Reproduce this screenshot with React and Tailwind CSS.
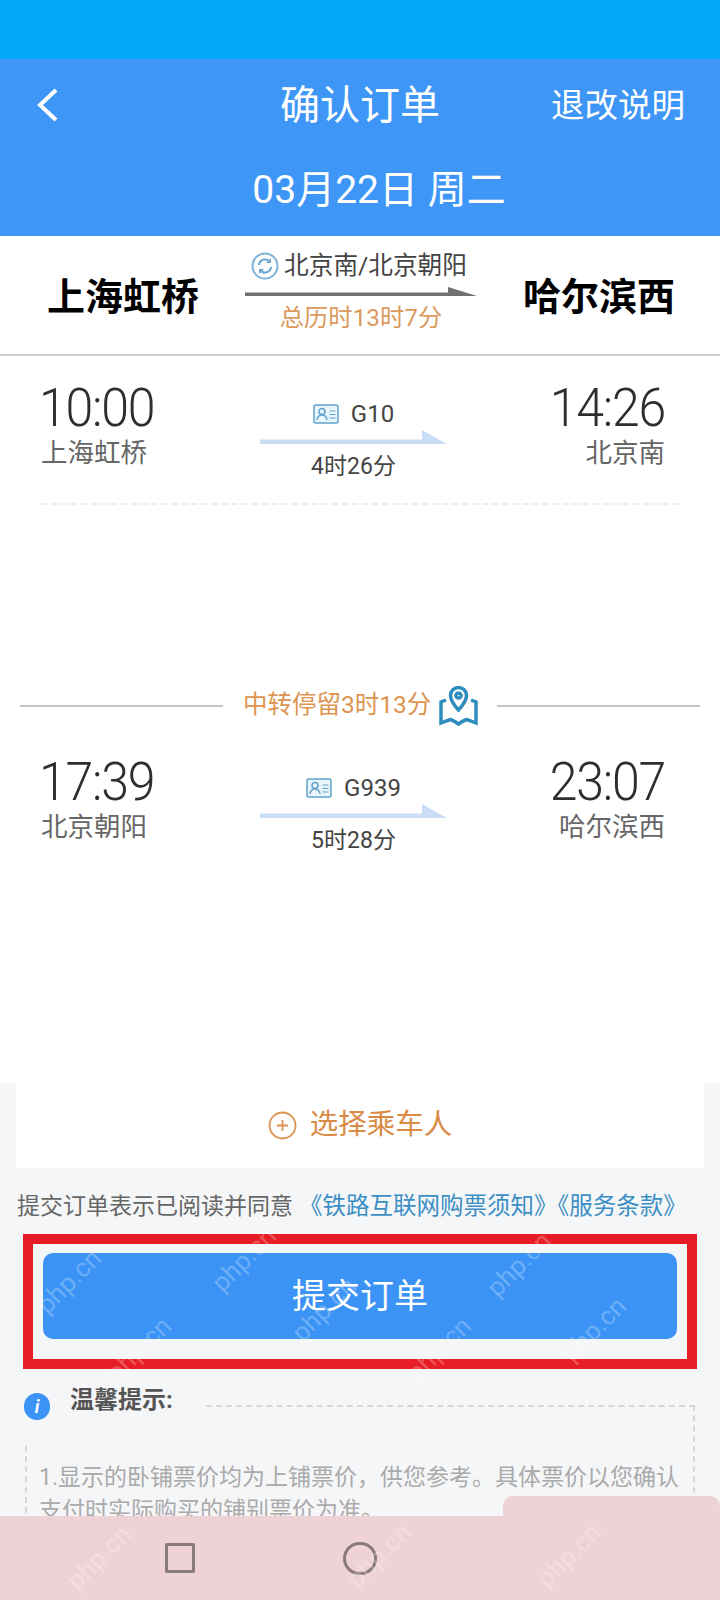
import React from 'react';

const font = { fontFamily: '"Roboto", "Noto Sans CJK SC", sans-serif' };

const marks = [
  [30, 1262], [205, 1240], [285, 1290], [480, 1245], [555, 1310], [100, 1330],
  [400, 1330], [60, 1538], [340, 1536], [530, 1536],
];

function SyncIcon() {
  return (
    <svg width="28" height="28" viewBox="0 0 28 28" fill="none">
      <circle cx="14" cy="14" r="12.5" stroke="#7db3d9" strokeWidth="2" />
      <path d="M8 13a6 6 0 0 1 10.5-3.5M20 15a6 6 0 0 1-10.5 3.5" stroke="#6fa8d2" strokeWidth="2.2" />
      <path d="M20 6v5h-5M8 22v-5h5" fill="#6fa8d2" />
    </svg>
  );
}

function IdIcon() {
  return (
    <svg width="26" height="20" viewBox="0 0 26 20" fill="none" stroke="#5fa3cc" strokeWidth="1.5">
      <rect x="1" y="1" width="24" height="18" rx="1.5" fill="#eaf4fb" />
      <circle cx="9" cy="7.5" r="3" />
      <path d="M4 16c.5-3.5 2.5-5 5-5s4.500 1.500 5 5" />
      <path d="M16.500 7h6M16.500 10.500h6M16.500 14h6" strokeWidth="1.200" />
    </svg>
  );
}

function MapIcon() {
  return (
    <svg width="41" height="41" viewBox="0 0 41 41" fill="none" stroke="#2f8dbd" strokeWidth="3.500">
      <path d="M20.500 25C15 19 12.500 15 12.500 10.500a8 8 0 0 1 16 0C28.500 15 26 19 20.500 25z" />
      <circle cx="20.500" cy="10.500" r="2.600" />
      <path d="M8 15 3 17v21q5-2 9.500-3.500 4 1.500 8 4.500 4-3 8-4.500 4.500 1.500 9.500 3.500V17l-5-2" />
    </svg>
  );
}

function Segment({ from, to, dep, arr, train, cost }) {
  return (
    <div className="grid grid-cols-[219px_187px_1fr] pl-[41px] pr-[55px]">
      <div>
        <p className="-ml-[2px] text-[50px] leading-[54px] font-light text-[#2e2e2e] tracking-tight origin-left scale-y-[1.06]">{dep}</p>
        <p className="text-[26.500px] leading-[36px] text-[#666]">{from}</p>
      </div>
      <div className="flex flex-col items-center pt-[19px]">
        <div className="flex items-center h-[28px] gap-[12px]">
          <IdIcon />
          <span className="text-[24px] text-[#444]">{train}</span>
        </div>
        <svg className="mt-[2px]" width="187" height="14" viewBox="0 0 187 14">
          <path d="M0 9.500H162V0L187 14H0z" fill="#c9ddf5" />
        </svg>
        <span className="mt-[7px] text-[23px] leading-[32px] text-[#444]">{cost}</span>
      </div>
      <div className="text-right">
        <p className="text-[50px] leading-[54px] font-light text-[#2e2e2e] tracking-tight origin-right scale-y-[1.06]">{arr}</p>
        <p className="text-[26.500px] leading-[36px] text-[#666]">{to}</p>
      </div>
    </div>
  );
}

export default function App() {
  return (
    <div className="relative h-[1600px] overflow-hidden bg-[#f5f6f8]" style={font}>
      <div className="h-[59px] bg-[#00a8f5]" />

      <header className="h-[177px] bg-[#3e96f6] text-white">
        <div className="relative flex items-center justify-center h-[94px]">
          <svg className="absolute left-[35px] top-[29px]" width="24" height="34" viewBox="0 0 24 34" fill="none" stroke="white" strokeWidth="4">
            <path d="M21 2 5 17l16 15" />
          </svg>
          <h1 className="text-[40px] font-normal">确认订单</h1>
          <button className="absolute right-[35px] text-[33.500px]">退改说明</button>
        </div>
        <p className="mt-[11px] pl-[38px] text-center text-[39px] leading-[52px]">03月22日 周二</p>
      </header>

      <section className="h-[120px] bg-white border-b-2 border-[#ccc] flex items-center justify-between pl-[47px] pr-[45px] pb-[6px]">
        <span className="mt-[10px] text-[38px] font-bold text-black">上海虹桥</span>
        <div className="flex flex-col items-center w-[232px]">
          <div className="flex items-center gap-[5px] h-[36px] -mt-[3px] mb-[3px] -ml-[4px]">
            <SyncIcon />
            <span className="text-[24.700px] text-[#444]">北京南/北京朝阳</span>
          </div>
          <svg width="232" height="10" viewBox="0 0 232 10">
            <path d="M0 5.500H203V0L232 9H0z" fill="#707070" />
          </svg>
          <span className="mt-[3px] -mb-[2px] text-[24.300px] leading-[36px] text-[#db9a5e]">总历时13时7分</span>
        </div>
        <span className="mt-[10px] text-[38px] font-bold text-black">哈尔滨西</span>
      </section>

      <main className="h-[727px] bg-white pt-[25px]">
        <Segment from="上海虹桥" to="北京南" dep="10:00" arr="14:26" train="G10" cost="4时26分" />
        <div className="mx-[41px] mt-[20px] border-t-2 border-dashed border-[#eee]" />

        <div className="flex items-center mt-[180px] px-[20px]">
          <div className="h-[2px] w-[203px] bg-[#c4c4c4]" />
          <span className="ml-[20px] text-[24.500px] text-[#dc9450]">中转停留3时13分</span>
          <div className="ml-[7px] mr-[18px]"><MapIcon /></div>
          <div className="h-[2px] flex-1 bg-[#c4c4c4]" />
        </div>

        <div className="mt-[29px]">
          <Segment from="北京朝阳" to="哈尔滨西" dep="17:39" arr="23:07" train="G939" cost="5时28分" />
        </div>
      </main>

      <section className="mx-[16px] h-[85px] bg-white flex items-center justify-center gap-[13px]">
        <svg width="29" height="29" viewBox="0 0 29 29" fill="none" stroke="#dc9450" strokeWidth="1.800">
          <circle cx="14.500" cy="14.500" r="13" />
          <path d="M14.500 9v11M9 14.500h11" />
        </svg>
        <span className="text-[28.500px] text-[#d98a45]">选择乘车人</span>
      </section>

      <p className="pl-[17px] mt-[20px] text-[23px] leading-[36px] whitespace-nowrap">
        <span className="text-[#666]">提交订单表示已阅读并同意</span>
        <span className="ml-[6px] text-[23.500px] text-[#3c8fc4]">《铁路互联网购票须知》《服务条款》</span>
      </p>

      <div className="mx-[23px] mt-[9px] h-[135px] border-[10px] border-[#e81c24] p-[9px_10px]">
        <button className="w-full h-[86px] rounded-[10px] bg-[#3b94f5] text-white text-[34px]">提交订单</button>
      </div>

      <section className="relative mx-[25px] mt-[36px] h-[200px] border-2 border-dashed border-[#d8d8d8] px-[12px] pt-[54px]">
        <div className="absolute -left-[3px] -top-[24px] flex items-start bg-[#f5f6f8] h-[60px] w-[180px]">
          <div className="mt-[10px] w-[26px] h-[27px] rounded-full bg-[#3b94f5] text-white text-[18px] font-bold italic flex items-center justify-center">i</div>
          <span className="-mt-[1px] ml-[20px] text-[24px] leading-[36px] font-bold text-[#555]">温馨提示:</span>
        </div>
        <p className="text-[23px] leading-[33px] text-[#aaa]">1.显示的卧铺票价均为上铺票价，供您参考。具体票价以您确认支付时实际购买的铺别票价为准。</p>
      </section>

      {/* pink bar covering the bottom of the capture */}
      <div className="absolute left-[503px] right-0 bottom-[84px] h-[20px] rounded-t-[10px] bg-[#eed2d6]" />
      <div className="absolute inset-x-0 bottom-0 h-[84px] bg-[#eed2d6]">
        <div className="absolute left-[165px] top-[27px] w-[30px] h-[30px] border-[3px] border-[#8a7a7e] rounded-[2px]" />
        <div className="absolute left-[343px] top-[26px] w-[34px] h-[33px] border-[3px] border-[#8a7a7e] rounded-full" />
      </div>

      {marks.map(([x, y]) => (
        <span
          key={`${x}-${y}`}
          className="absolute -rotate-45 text-[26px] text-white/25 pointer-events-none"
          style={{ left: x, top: y }}
        >
          php.cn
        </span>
      ))}
    </div>
  );
}
